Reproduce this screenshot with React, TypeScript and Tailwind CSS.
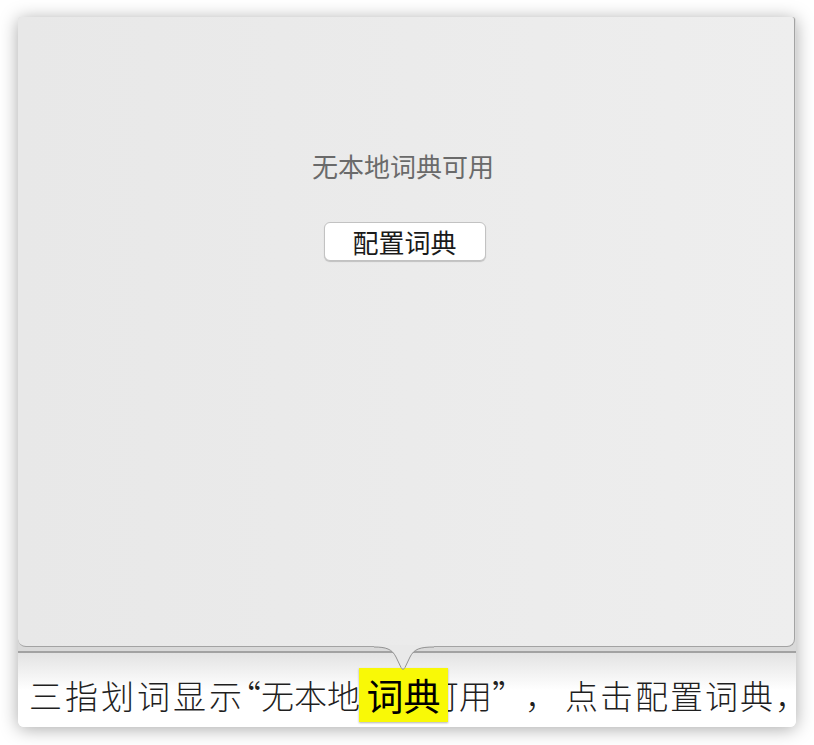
import React from "react";

const cjk = { fontFamily: '"Noto Sans CJK SC", "Noto Sans", sans-serif' };

export default function App() {
  return (
    <div className="w-[814px] h-[745px] bg-white overflow-hidden pt-[17px] pl-[18px]" style={cjk}>
      <div className="relative w-[778px] h-[710px] bg-white rounded-b-[6px] rounded-t-[3px] shadow-[0_2px_18px_rgba(0,0,0,0.34)] flex flex-col">
        {/* top area: popover over window */}
        <div className="h-[636px] bg-[#d9d9d9] border-b-2 border-[#a2a2a2] rounded-t-[3px]">
          <div className="w-[777px] h-[630px] bg-gradient-to-r from-[#e8e8e8] to-[#eeeeee] border-r border-b border-[#a3a3a3] rounded-b-[8px] rounded-t-[3px] flex flex-col items-center pt-[132px] pr-[6px]">
            <div className="text-[26px] leading-[34px] text-[#6a6a6a]">无本地词典可用</div>
            <button className="mt-[39px] w-[162px] h-[39px] bg-white border border-[#c2c2c2] rounded-[6px] shadow-[0_1px_1px_rgba(0,0,0,0.18)] text-[26px] leading-[37px] text-[#1a1a1a] ml-[3px]">
              配置词典
            </button>
          </div>
        </div>
        {/* text area */}
        <div className="relative flex-1 bg-gradient-to-b from-[#e3e3e3] via-white to-white rounded-b-[6px] flex items-center pl-[11px] pt-[10px]">
          <div className="text-[33px] leading-[40px] text-[#1f1f1f] font-light whitespace-nowrap">
            <span className="tracking-[3px]">三指划词显示</span>
            <span className="inline-block ml-[-17px]">“</span>
            <span>无本地</span>
            <span className="inline-block w-[66px]"></span>
            <span>可用</span>
            <span className="inline-block w-[33px]">”</span>
            <span className="inline-block w-[40px]">，</span>
            <span className="tracking-[2px]">点击配置词典</span>
            <span>，</span>
          </div>
          <div className="absolute left-[341px] top-[15px] w-[89px] h-[54px] bg-[#f9f906] shadow-[0_1px_2px_rgba(0,0,0,0.3)] flex items-center justify-center text-[37px] leading-[54px] text-black">
            词典
          </div>
        </div>
        {/* arrow */}
        <svg className="absolute left-[356px] top-[628px]" width="60" height="28" viewBox="0 0 60 28">
          <path d="M0 0 H60 V2 C46 2 40 4 36 12 L31 22.5 Q29 26 27 22.5 L22 12 C18 4 12 2 0 2 Z" fill="#e9e9e9" />
          <path d="M0 2 C12 2 18 4 22 12 L27 22.5 Q29 26 31 22.5 L36 12 C40 4 46 2 60 2" fill="none" stroke="#929292" strokeWidth="1" />
        </svg>
      </div>
    </div>
  );
}
